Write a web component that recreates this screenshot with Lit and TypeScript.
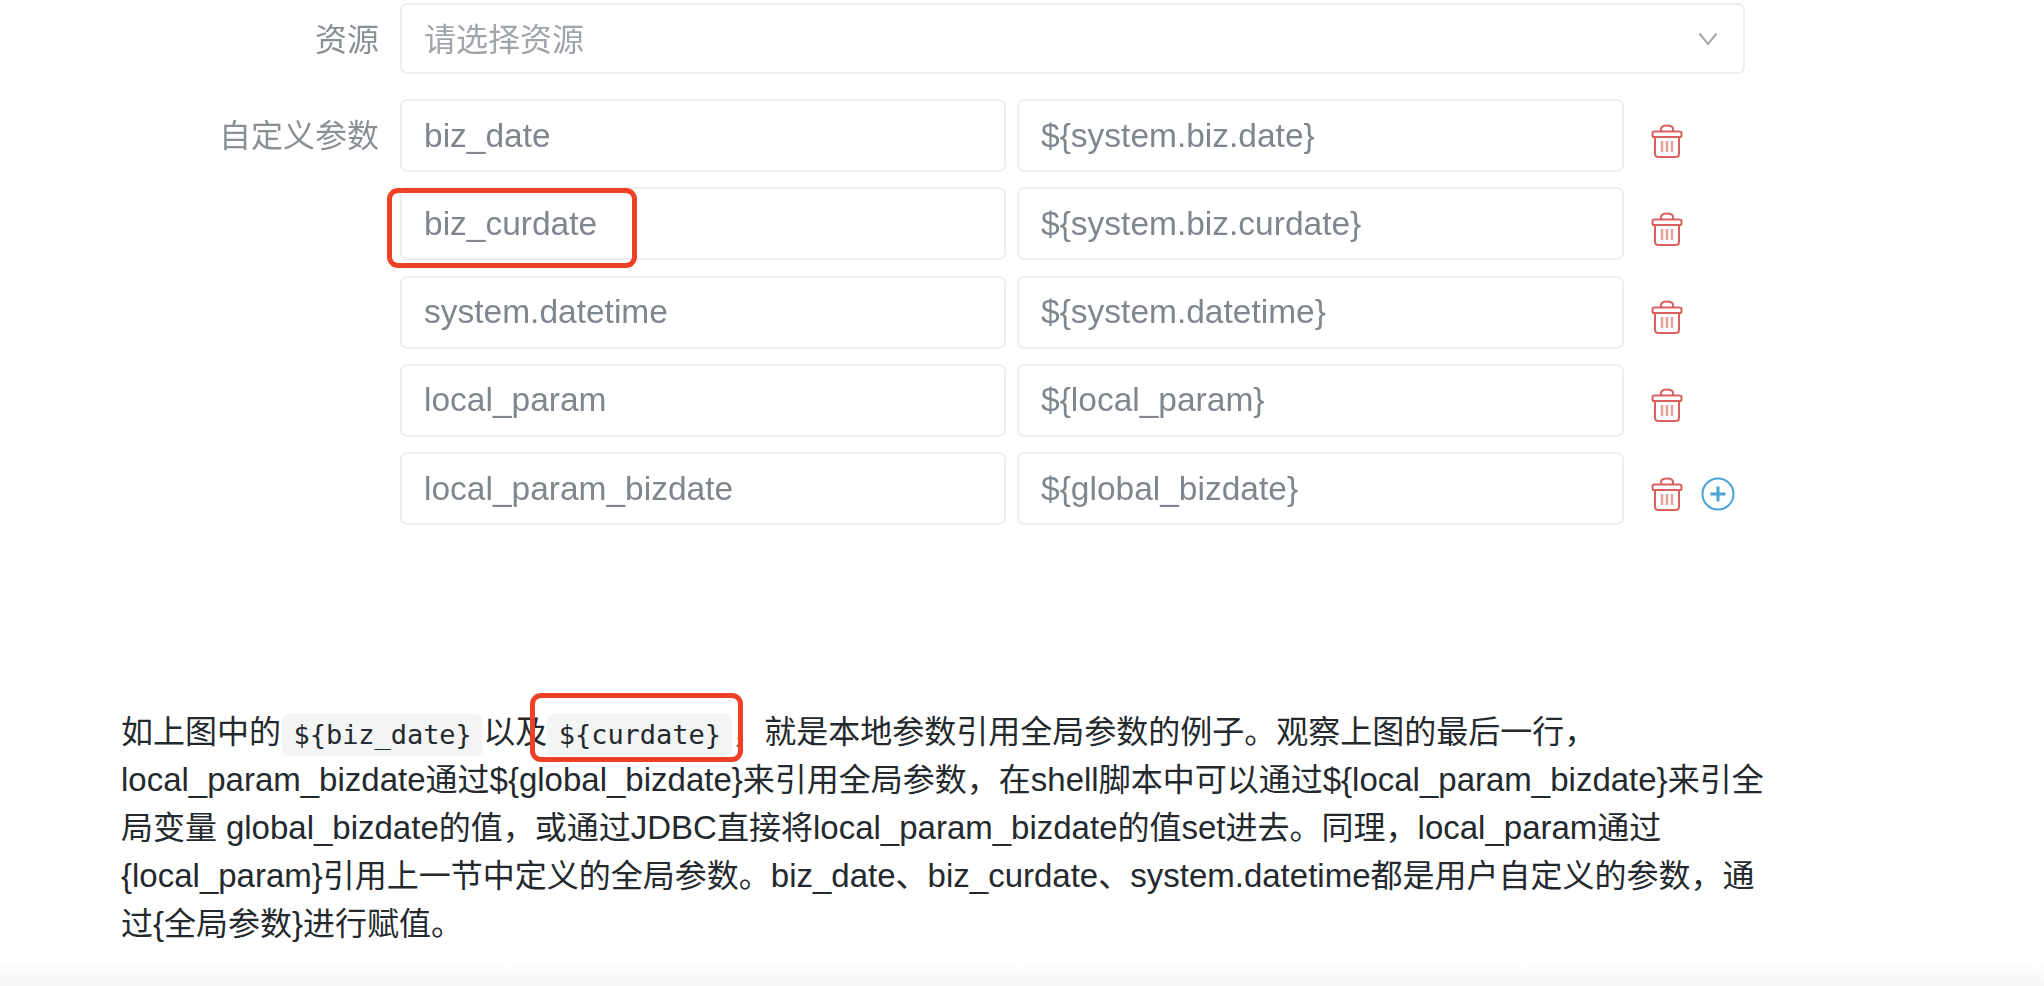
import { LitElement, html, css, svg } from 'lit';
import { customElement } from 'lit/decorators.js';

const PARAMS = [
  { name: 'biz_date', value: '${system.biz.date}' },
  { name: 'biz_curdate', value: '${system.biz.curdate}', marked: true },
  { name: 'system.datetime', value: '${system.datetime}' },
  { name: 'local_param', value: '${local_param}' },
  { name: 'local_param_bizdate', value: '${global_bizdate}', last: true },
];

const trashIcon = svg`
  <svg class="icon" width="32" height="34" viewBox="0 0 32 34" fill="none" stroke="#d9605c" stroke-width="2">
    <path d="M10 7.500V5c0-2 2-3.500 6-3.500s6 1.500 6 3.500v2.500" />
    <path d="M1.500 12V9.500c0-1.200 .8-2 2-2h25c1.200 0 2 .8 2 2V12c0 .6-.4 1-1 1h-27c-.6 0-1-.4-1-1z" />
    <path d="M4 13v16.500c0 2 1.500 3.500 3.500 3.500h17c2 0 3.500-1.500 3.500-3.500V13" />
    <path d="M11 17v11M16 17v11M21 17v11" stroke="#e3a09d" stroke-width="2.500" />
  </svg>`;

const plusIcon = svg`
  <svg class="icon" width="34" height="34" viewBox="0 0 34 34" fill="none" stroke="#4aa3d6">
    <circle cx="17" cy="17" r="15.500" stroke-width="2" />
    <path d="M9.500 17h15M17 9.500v15" stroke-width="3" />
  </svg>`;

const chevronIcon = svg`
  <svg class="icon" width="20" height="14" viewBox="0 0 20 14" fill="none" stroke="#a3a8ae" stroke-width="2">
    <path d="M1.500 1.500L10 12l8.500-10.500" />
  </svg>`;

// latin runs are set a little larger than the CJK around them
const mixed = (text: string) =>
  text
    .split(/([\x21-\x7e]+(?: [\x21-\x7e]+)*)/)
    .map((run, i) => (i % 2 ? html`<span class="lat">${run}</span>` : run));

@customElement('app-root')
export class AppRoot extends LitElement {
  static styles = css`
    :host {
      display: block;
      height: 986px;
      overflow: hidden;
      position: relative;
      background: #fff;
      font-family: 'Liberation Sans', 'Noto Sans CJK SC', sans-serif;
    }
    .form {
      padding-top: 3px;
      display: flex;
      flex-direction: column;
      gap: 22px;
    }
    .form-row {
      display: grid;
      grid-template-columns: 379px 1fr;
      column-gap: 21px;
    }
    .label {
      font-size: 32px;
      color: #8b9097;
      text-align: right;
      line-height: 73px;
      padding-top: 1px;
      filter: blur(0.7px);
    }
    .box {
      box-sizing: border-box;
      height: 71px;
      border: 2px solid #eceef1;
      border-radius: 7px;
      padding: 0 22px;
      display: flex;
      align-items: center;
      font-size: 33.500px;
      color: #80868e;
      background: #fff;
      white-space: nowrap;
    }
    .box span {
      filter: blur(0.7px);
    }
    .select {
      width: 1345px;
      justify-content: space-between;
      padding-right: 25px;
    }
    .select span {
      font-size: 32px;
      color: #a0a5ab;
      margin-bottom: 3px;
    }
    .params {
      display: flex;
      flex-direction: column;
      gap: 15.250px;
    }
    .param {
      display: flex;
      align-items: center;
      height: 73px;
    }
    .param .box {
      height: 73px;
    }
    .param-name {
      width: 606px;
      position: relative;
    }
    .param-value {
      width: 607px;
      margin-left: 11px;
    }
    .actions {
      display: flex;
      align-items: center;
      gap: 18px;
      margin-left: 27px;
      padding-top: 10px;
    }
    .icon {
      display: block;
      filter: blur(0.5px);
    }
    .mark {
      position: absolute;
      box-sizing: border-box;
      border: 5px solid #ee4026;
      border-radius: 11px;
      pointer-events: none;
    }
    .param-name .mark {
      left: -15px;
      top: -1px;
      width: 250px;
      height: 80px;
    }
    .article {
      margin: 183px 0 0 121px;
      font-size: 32px;
      line-height: 48px;
      color: #24292e;
      white-space: nowrap;
    }
    .lat {
      font-size: 33px;
    }
    code {
      position: relative;
      display: inline-block;
      height: 42px;
      line-height: 42px;
      padding: 0 11.500px;
      vertical-align: -1px;
      background: #f3f4f4;
      border-radius: 7px;
      font-family: 'DejaVu Sans Mono', 'Liberation Mono', monospace;
      font-size: 27px;
      letter-spacing: -0.05px;
    }
    .first-code {
      margin-left: 1px;
    }
    code .mark {
      left: -17px;
      top: -21px;
      width: 213px;
      height: 69px;
    }
    .fade {
      position: absolute;
      left: 0;
      right: 0;
      bottom: 0;
      height: 26px;
      background: linear-gradient(#ffffff, #f6f6f6);
    }
  `;

  render() {
    return html`
      <div class="form">
        <div class="form-row">
          <div class="label">资源</div>
          <div class="box select"><span>请选择资源</span>${chevronIcon}</div>
        </div>
        <div class="form-row">
          <div class="label">自定义参数</div>
          <div class="params">
            ${PARAMS.map(
              (p) => html`
                <div class="param">
                  <div class="box param-name">
                    <span>${p.name}</span>
                    ${p.marked ? html`<div class="mark"></div>` : ''}
                  </div>
                  <div class="box param-value"><span>${p.value}</span></div>
                  <div class="actions">${trashIcon}${p.last ? plusIcon : ''}</div>
                </div>
              `
            )}
          </div>
        </div>
      </div>
      <div class="article">
        如上图中的<code class="first-code">\${biz_date}</code>以及<code>\${curdate}<div class="mark"></div></code>，就是本地参数引用全局参数的例子。观察上图的最后一行，<br />
        ${mixed('local_param_bizdate通过${global_bizdate}来引用全局参数，在shell脚本中可以通过${local_param_bizdate}来引全')}<br />
        ${mixed('局变量 global_bizdate的值，或通过JDBC直接将local_param_bizdate的值set进去。同理，local_param通过')}<br />
        ${mixed('{local_param}引用上一节中定义的全局参数。biz_date、biz_curdate、system.datetime都是用户自定义的参数，通')}<br />
        ${mixed('过{全局参数}进行赋值。')}
      </div>
      <div class="fade"></div>
    `;
  }
}
